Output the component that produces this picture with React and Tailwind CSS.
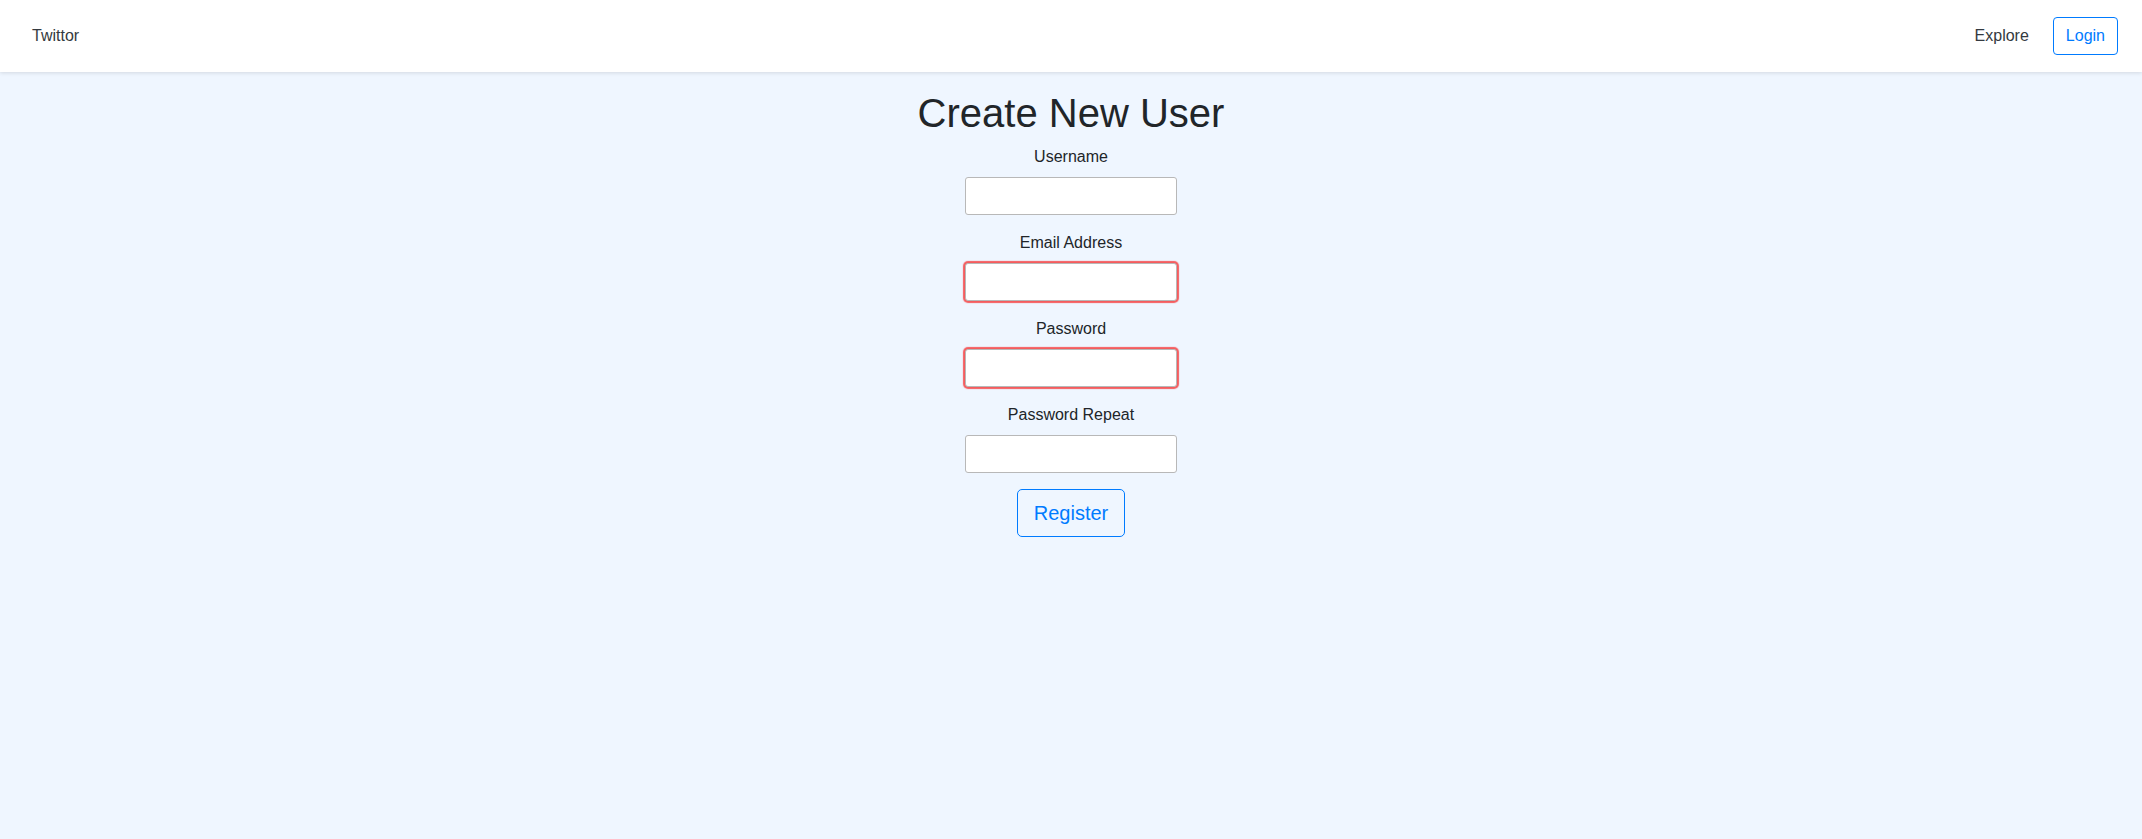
import React from "react";

const fields = [
  { label: "Username", type: "text", invalid: false },
  { label: "Email Address", type: "email", invalid: true },
  { label: "Password", type: "password", invalid: true },
  { label: "Password Repeat", type: "password", invalid: false },
];

export default function App() {
  return (
    <div className="min-h-screen bg-[#eff6ff] font-['Liberation_Sans',Arial,sans-serif] text-[#212529]">
      {/* Navbar */}
      <nav className="h-[72px] bg-white flex items-center justify-between pl-8 pr-6 shadow-[0_1px_4px_rgba(0,0,0,0.12)] relative">
        <a className="text-base text-[#343a40]">Twittor</a>
        <div className="flex items-center gap-6">
          <a className="text-base text-[#343a40]">Explore</a>
          <button className="h-[38px] px-3 text-base text-[#007bff] border border-[#007bff] rounded-[4px] bg-transparent">
            Login
          </button>
        </div>
      </nav>

      {/* Form */}
      <div className="flex flex-col items-center pt-[17px]">
        <h1 className="text-[40px] leading-[1.2] mb-2">Create New User</h1>
        <form className="flex flex-col items-center">
          {fields.map((f) => (
            <div key={f.label} className="flex flex-col items-center mb-4">
              <label className="text-base leading-6 mb-2">{f.label}</label>
              <input
                type={f.type}
                className={`w-[212px] h-[38px] bg-white border border-[#b8b8b8] rounded-[3px] outline-none ${
                  f.invalid ? "shadow-[0_0_1px_2px_rgba(245,40,40,0.75)]" : ""
                }`}
              />
            </div>
          ))}
          <button
            type="button"
            className="h-12 px-4 text-xl leading-[1.5] text-[#007bff] border border-[#007bff] rounded-[5px] bg-transparent"
          >
            Register
          </button>
        </form>
      </div>
    </div>
  );
}
